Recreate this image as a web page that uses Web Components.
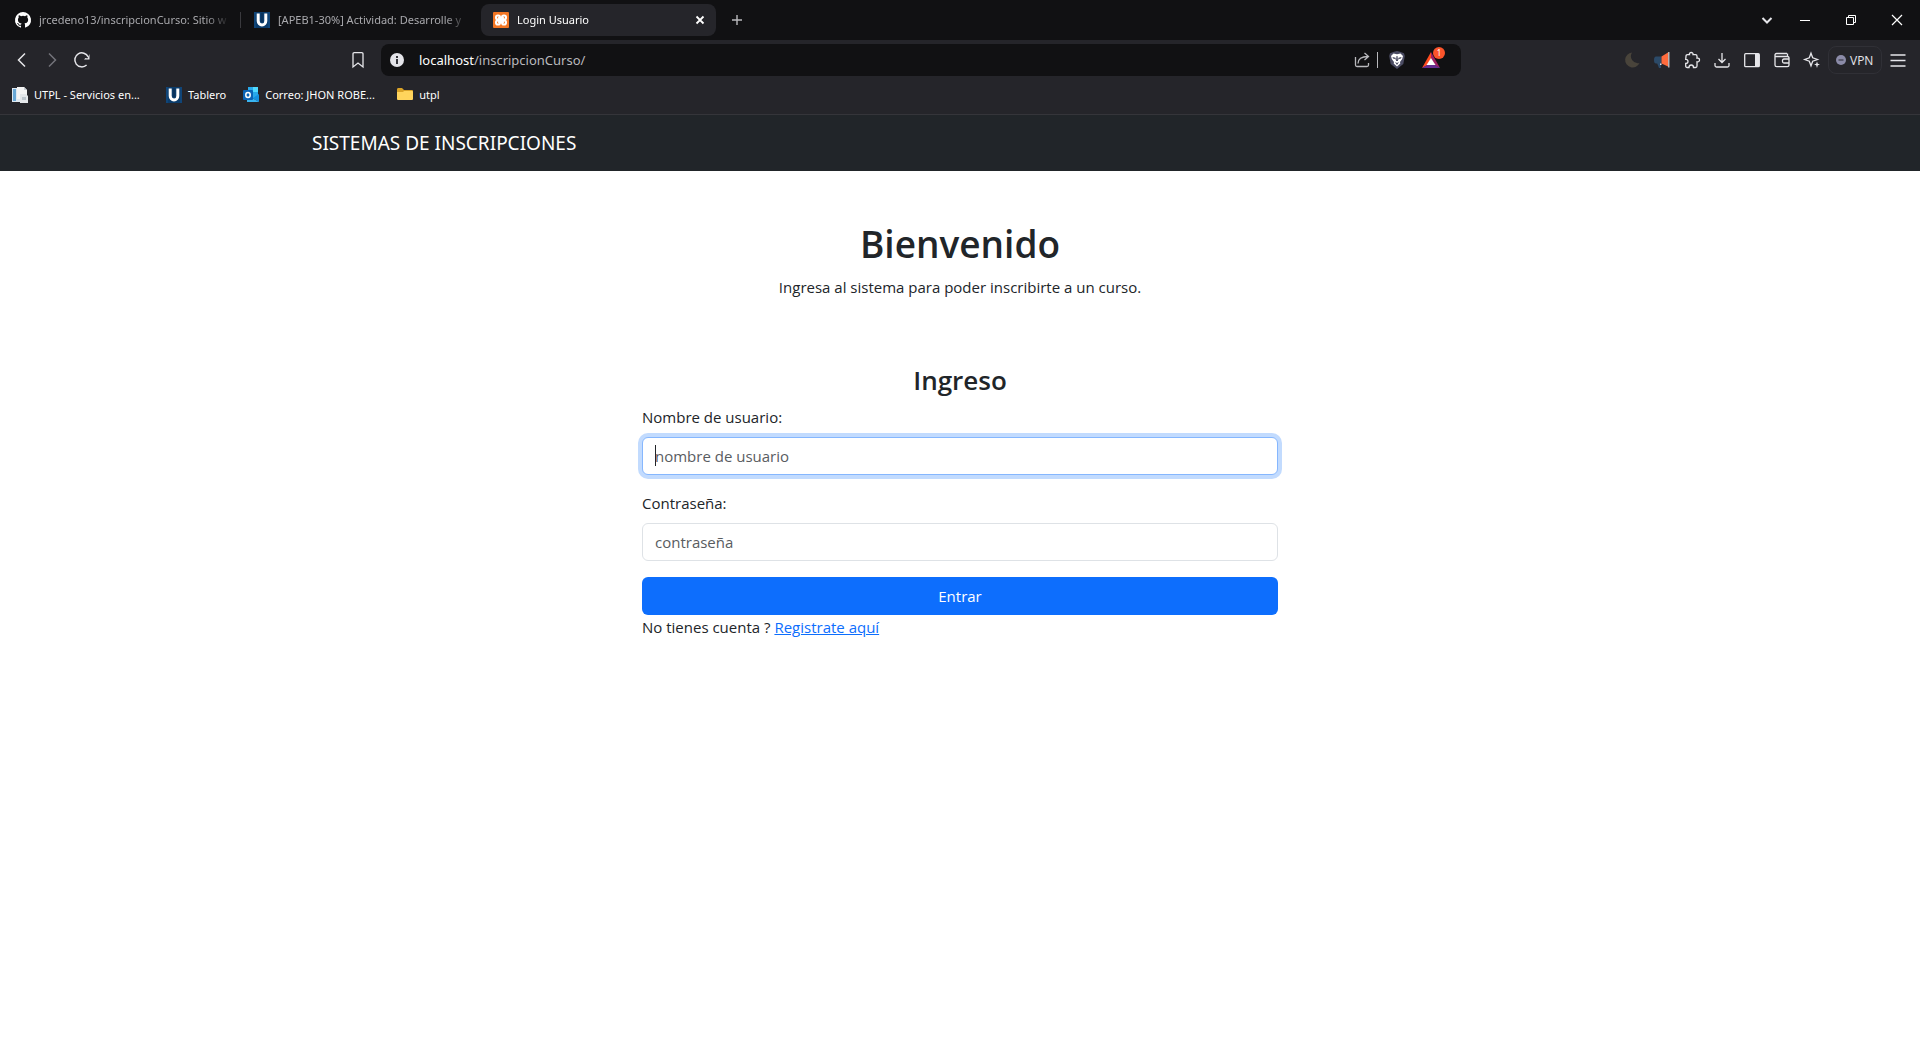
<!DOCTYPE html>
<html lang="es">
<head>
<meta charset="utf-8">
<title>Login Usuario</title>
<style>
  body { margin: 0; background: #fff; color: #212529; font-family: "Open Sans", "Noto Sans", sans-serif; font-size: 15px; line-height: 24px; }
</style>
</head>
<body>
<browser-frame>
  <browser-tab slot="tabs" label="jrcedeno13/inscripcionCurso: Sitio w" icon="github" divided></browser-tab>
  <browser-tab slot="tabs" label="[APEB1-30%] Actividad: Desarrolle y" icon="utpl"></browser-tab>
  <browser-tab slot="tabs" label="Login Usuario" icon="xampp" active></browser-tab>
  <bookmark-link slot="bookmarks" icon="page" long>UTPL - Servicios en...</bookmark-link>
  <bookmark-link slot="bookmarks" icon="utpl">Tablero</bookmark-link>
  <bookmark-link slot="bookmarks" icon="outlook" long>Correo: JHON ROBE...</bookmark-link>
  <bookmark-link slot="bookmarks" icon="folder">utpl</bookmark-link>
</browser-frame>
<site-navbar>SISTEMAS DE INSCRIPCIONES</site-navbar>
<welcome-banner heading="Bienvenido">Ingresa al sistema para poder inscribirte a un curso.</welcome-banner>
<login-form></login-form>

<script>
const U = '<rect width="16" height="16" fill="#0b3c6b"/><path d="M1 0v16M15 0v16" stroke="#164f86"/><path d="M4.200 1.500V9a3.800 4 0 0 0 7.600 0V1.500" fill="none" stroke="#fff" stroke-width="3"/><path d="M8 1v9" stroke="#0a2b50"/>';
const ICONS = {
  github: '<path fill="#fff" d="M8 0a8 8 0 0 0-2.530 15.590c.4.070.550-.170.550-.380v-1.490c-2.010.370-2.530-.490-2.690-.940-.090-.230-.480-.940-.820-1.130-.280-.150-.680-.520-.010-.530.630-.010 1.080.580 1.230.820.720 1.210 1.870.870 2.330.660.070-.520.280-.870.510-1.070-1.780-.2-3.640-.890-3.640-3.950 0-.870.310-1.590.820-2.150-.080-.2-.360-1.020.080-2.120 0 0 .670-.210 2.200.820a7.500 7.500 0 0 1 4 0c1.530-1.040 2.200-.820 2.200-.820.440 1.100.160 1.920.080 2.120.510.560.820 1.270.820 2.150 0 3.070-1.870 3.750-3.650 3.950.290.250.540.730.540 1.480v2.200c0 .210.150.460.550.380A8 8 0 0 0 8 0z"/>',
  utpl: U,
  xampp: '<rect width="16" height="16" rx="1" fill="#f37623"/><path d="M5.200 5.200l5.600 5.600M10.800 5.200l-5.600 5.600" stroke="#fff" stroke-width="2"/><g fill="none" stroke="#fff" stroke-width="2"><rect x="3" y="3.500" width="4" height="4" rx="1.800"/><rect x="9" y="3.500" width="4" height="4" rx="1.800"/><rect x="3" y="8.500" width="4" height="4" rx="1.800"/><rect x="9" y="8.500" width="4" height="4" rx="1.800"/></g>',
  page: '<path d="M0 1h9v14H0z" fill="#dfe9f1"/><path d="M1 2h3v12H1z" fill="#69a8d6"/><path d="M5 0h7l3 3v9H5z" fill="#f4f4f4"/><path d="M12 0v3h3" fill="#c8ced4"/><path d="M8 7h6l2 2v7H8z" fill="#e4e7ea"/><path d="M10 10h4v3h-4z" fill="#bcc5cc"/>',
  outlook: '<path d="M5 0h10v11H5z" fill="#28a8ea"/><path d="M10 0h5v5h-5z" fill="#50d9ff"/><path d="M5 5h5v6H5z" fill="#0364b8"/><path d="M4 8l12 7V7l-6 4z" fill="#1490df"/><path d="M4 8v7h12L4 8z" fill="#39b5f2"/><rect y="3" width="10" height="10" rx="1" fill="#0a63b5"/><ellipse cx="5" cy="8" rx="2.200" ry="2.500" fill="none" stroke="#fff" stroke-width="1.500"/>',
  folder: '<path d="M0 2.500Q0 1 1 1h4l2 2h8q1 0 1 1v8H0z" fill="#d9a227"/><path d="M0 5h6l1-1h8q1 0 1 1v7q0 1-1 1H1q-1 0-1-1z" fill="#ffd45c"/>',
  back: '<path class="s" d="M11 1.500L4.500 8l6.500 6.500" stroke-width="1.500"/>',
  forward: '<path class="s" d="M5 1.500L11.500 8 5 14.500" stroke-width="1.500"/>',
  reload: '<path class="s" d="M12.600 13A7 7 0 1 1 14.200 5" stroke-width="1.500"/><path d="M15.500 2v5.500H10L11.500 6l2 .5z" fill="currentColor"/>',
  bookmark: '<path class="s" d="M3 2q0-1.300 1.300-1.300h7.400Q13 .7 13 2v13l-5-4-5 4z" stroke-width="1.300"/>',
  info: '<circle cx="8" cy="8" r="7" fill="#e4e4e9"/><path d="M7 7h2v5H7zM7 4h2v2H7z" fill="#35353b"/>',
  share: '<path class="s" d="M1.500 5v8q0 1.500 1.500 1.500h10q1.500 0 1.500-1.500v-2M4 11.500q0-7 10-7M10.500 1l4 3.500-4 3.500" stroke-width="1.300"/>',
  brave: '<path d="M8-1l3 .8 4 1.500.8 2.700-1.500 8L8 17 1.700 12 .2 4 1 1.300l4-1.500z" fill="#4a4b62"/><path d="M4.500 1.500L8 2.300l3.500-.8L14 4l-.8 3-2.200 3 .3 1.500L8 14.500 4.700 11.500 5 10 2.800 7 2 4z" fill="#fff"/><path d="M3.500 5l3 .8L7 8l-1-1-2-.6zM12.500 5l-3 .8L9 8l1-1 2-.6zM6 10l2 1 2-1-2 3zM7.500 4h1L9 9H7z" fill="#4a4b62"/>',
  bat: '<path d="M9 0L0 16l5-2.500 4-7z" fill="#ff4b1f"/><path d="M9 0l9 16-5-2.500-4-7z" fill="#9e1f63"/><path d="M0 16l5-3h8l5 3z" fill="#662d91"/><path d="M9 6l4.500 7h-9z" fill="#fff"/>',
  moon: '<path d="M8 .5A7.500 7.500 0 1 0 15.500 11 7 7 0 0 1 8 .5z" fill="#49443b"/>',
  mega: '<path d="M2 4.500h5.500v7H2Q0 11.500 0 8t2-3.500zM3 11h4v5H5z" fill="#2c4a68"/><path d="M7.500 4.500L14 .5v14l-6.500-3z" fill="#ff6b3d"/><path d="M14.800 0v15.500" stroke="#ded8d8" stroke-width="1.200"/><path d="M6 11.500h1.500V13H6z" fill="#dfe6ee"/>',
  puzzle: '<path class="s" d="M2 4.200q0-1.500 1.500-1.500h2C5 .8 6.300.5 7.200.5S9.400.8 9 2.700h2.500q1.500 0 1.500 1.500v2c1.900-.4 2.500.8 2.500 1.800s-.6 2.100-2.500 1.800V14q0 1.500-1.500 1.500H9.500c0-2-1-2.500-2.200-2.500S5 13.500 5 15.500H3.200Q1.700 15.500 1.700 14v-2.700c2 0 2.300-1 2.300-1.900S3.500 7.300 1.700 7.300z" stroke-width="1.300"/>',
  download: '<path class="s" d="M8 1v9.500M4.500 7L8 10.500 11.500 7M1 11v2.500q0 1.500 1.500 1.500h11q1.500 0 1.500-1.500V11" stroke-width="1.300"/>',
  sidebar: '<rect class="s" x=".7" y="1.700" width="14.600" height="13" rx="1" stroke-width="1.300"/><path d="M11 2h4v12h-4z" fill="currentColor"/>',
  wallet: '<path class="s" d="M1 3v10q0 1.700 1.700 1.700h10.600q1.700 0 1.700-1.700V6q0-1.500-1.500-1.500h-11Q1 4.500 1 3q0-1.500 1.500-1.500h10.500M15 7h-5q-1.500 0-1.500 1.500v1Q8.500 11 10 11h5M13.500 1.500v3" stroke-width="1.300"/>',
  sparkle: '<path class="s" d="M7 1.200l1.700 4.600 4.800 1.700L8.700 9.200 7 13.800 5.300 9.200.7 7.500l4.600-1.700z" stroke-width="1.300"/><path d="M13 9.500l.8 2.200 2.200.8-2.200.8L13 16l-.8-2.700-2.200-.8 2.200-.8z" fill="currentColor"/>',
  menu: '<path class="s" d="M.5 3h15M.5 8.500h15M.5 14h15" stroke-width="1.400"/>',
  chevron: '<path class="s" d="M3.500 6L8 10.500 12.500 6" stroke-width="2"/>',
  min: '<path d="M3 8h10v1H3z" fill="currentColor"/>',
  restore: '<path class="s" d="M3.500 5.500h7v7h-7zM5.500 5.500v-2h7v7h-2"/>',
  exit: '<path class="s" d="M3 3l10 10M13 3L3 13" stroke-width="1.200"/>',
  close: '<path class="s" d="M4.500 4.500l7 7M11.500 4.500l-7 7" stroke-width="1.800"/>',
  plus: '<path class="s" d="M8 3v10M3 8h10" stroke-width="1.400"/>',
  off: '<circle cx="8" cy="8" r="8" fill="#8b8ba8"/><path d="M4 7h8v2H4z" fill="#3c3c4b"/>'
};

// Attaches an open shadow root filled with the given markup.
class Base extends HTMLElement {
  connectedCallback() {
    if (!this.shadowRoot) this.attachShadow({ mode: 'open' }).innerHTML = '<style>*{box-sizing:border-box}</style>' + this.view();
  }
}

customElements.define('ui-icon', class extends Base {
  view() {
    const w = this.getAttribute('name') === 'bat' ? 18 : 16;
    return `<style>:host{display:block;flex:none;width:${w}px;height:16px}:host([small]){width:10px;height:10px}svg{display:block;width:100%;height:100%;overflow:visible}.s{fill:none;stroke:currentColor}</style>
    <svg viewBox="0 0 ${w} 16" aria-hidden="true">${ICONS[this.getAttribute('name')]}</svg>`;
  }
});

customElements.define('icon-button', class extends Base {
  view() {
    return `<style>
      :host{display:block;flex:none;width:30px;height:30px;color:#e6e6ea}
      :host([wide]){width:46px;height:40px;color:#fff}
      :host([dim]){color:#73737a}
      :host([soft]){color:#b9b9bd}
      button{width:100%;height:100%;display:flex;align-items:center;justify-content:center;border:0;padding:0;background:none;color:inherit}
    </style><button type="button" aria-label="${this.getAttribute('label')}"><ui-icon name="${this.getAttribute('icon')}"></ui-icon></button>`;
  }
});

customElements.define('browser-tab', class extends Base {
  view() {
    const active = this.hasAttribute('active');
    return `<style>
      :host{box-sizing:border-box;display:flex;align-items:center;gap:8px;flex:1 1 0;min-width:0;height:32px;padding:0 8px 0 12px;border-radius:8px;color:#a9a9ad;font-size:11px;line-height:16px;position:relative}
      :host([active]){background:#25252a;color:#fff}
      :host([divided])::after{content:"";position:absolute;right:-3px;top:8px;width:1px;height:16px;background:#3a3a3e}
      span{flex:1;overflow:hidden;white-space:nowrap;-webkit-mask-image:linear-gradient(to left,transparent,#000 24px);mask-image:linear-gradient(to left,transparent,#000 24px)}
      button{border:0;background:none;padding:0;color:inherit}
    </style>
    <ui-icon name="${this.getAttribute('icon')}"></ui-icon><span>${this.getAttribute('label')}</span>
    ${active ? '<button type="button" aria-label="Cerrar"><ui-icon name="close"></ui-icon></button>' : ''}`;
  }
});

customElements.define('bookmark-link', class extends Base {
  view() {
    return `<style>
      :host{display:block}
      :host([long]){width:137px}
      a{display:flex;align-items:center;gap:6px;color:#fff;text-decoration:none;font-size:11px;line-height:16px;white-space:nowrap}
    </style><a href="#"><ui-icon name="${this.getAttribute('icon')}"></ui-icon><slot></slot></a>`;
  }
});

customElements.define('address-bar', class extends Base {
  view() {
    return `<style>
      :host{box-sizing:border-box;display:flex;align-items:center;height:32px;padding:0 12px 0 8px;border-radius:8px;background:#111113;min-width:0}
      .url{flex:1;padding-left:14px;font:13px/20px "Noto Sans",sans-serif;color:#b9b9bd;white-space:nowrap}
      b{font-weight:400;color:#fff}
      hr{width:1px;height:16px;margin:0 11px 0 0;border:0;background:#b9b9bd}
      .bat{position:relative;margin-left:17px;margin-right:9px}
      .badge{position:absolute;left:11px;top:-5px;width:12px;height:12px;border-radius:6px;background:#fb542b;color:#fff;font-size:8px;line-height:12px;text-align:center}
    </style>
    <ui-icon name="info"></ui-icon><div class="url"><b>localhost</b>/inscripcionCurso/</div>
    <icon-button soft icon="share" label="Compartir"></icon-button><hr>
    <ui-icon name="brave"></ui-icon>
    <div class="bat"><ui-icon name="bat"></ui-icon><span class="badge">1</span></div>`;
  }
});

customElements.define('browser-frame', class extends Base {
  view() {
    const tools = [['moon','Modo oscuro'],['mega','Avisos'],['puzzle','Extensiones'],['download','Descargas'],['sidebar','Panel lateral'],['wallet','Cartera'],['sparkle','Leo']];
    return `<style>
      :host{display:block;background:#25252a;font-family:"Noto Sans",sans-serif}
      .strip{display:flex;align-items:center;height:40px;padding-left:3px;background:#111113}
      .tabs{display:flex;gap:4px;flex:0 1 713px;min-width:0}
      .strip icon-button:not([wide]){margin-left:6px}
      .fill{flex:1}
      .tools{display:flex;align-items:center;height:40px;padding:0 7px}
      .left{flex:246 1 0}
      address-bar{flex:1060 1 0;margin-left:8px}
      .right{flex:156 1 0}
      .vpn{display:flex;align-items:center;gap:4px;width:54px;height:28px;padding:0 7px;margin:0 1px;border:1px solid #303036;border-radius:8px;background:none;color:#e6e6ea;font:12px "Open Sans",sans-serif}
      .marks{display:flex;align-items:center;gap:17px;height:35px;padding:0 12px 4px;border-bottom:1px solid #35353a}
    </style>
    <div class="strip"><div class="tabs"><slot name="tabs"></slot></div>
      <icon-button soft icon="plus" label="Nueva"></icon-button><div class="fill"></div>
      <icon-button icon="chevron" label="Buscar"></icon-button>
      <icon-button wide icon="min" label="Minimizar"></icon-button><icon-button wide icon="restore" label="Restaurar"></icon-button><icon-button wide icon="exit" label="Cerrar"></icon-button>
    </div>
    <div class="tools">
      <icon-button icon="back" label="Volver"></icon-button><icon-button dim icon="forward" label="Adelante"></icon-button><icon-button icon="reload" label="Recargar"></icon-button>
      <div class="left"></div><icon-button icon="bookmark" label="Marcador"></icon-button><address-bar></address-bar><div class="right"></div>
      ${tools.map(([i, l]) => `<icon-button icon="${i}" label="${l}"></icon-button>`).join('')}
      <button class="vpn" type="button"><ui-icon small name="off"></ui-icon>VPN</button>
      <icon-button icon="menu" label="Menú"></icon-button>
    </div>
    <div class="marks"><slot name="bookmarks"></slot></div>`;
  }
});

customElements.define('site-navbar', class extends Base {
  view() {
    return `<style>
      :host{display:block;background:#212529;padding:8px 0}
      nav{box-sizing:border-box;max-width:1320px;margin:0 auto;padding:0 12px}
      a{display:inline-block;padding:5px 0;font:19px/30px "Noto Sans",sans-serif;color:#fff;text-decoration:none;vertical-align:top}
    </style><nav><a href="#"><slot></slot></a></nav>`;
  }
});

customElements.define('welcome-banner', class extends Base {
  view() {
    return `<style>
      :host{display:block;padding:48px 12px;text-align:center}
      h1{margin:0 0 6px;font-size:37px;line-height:50px;font-weight:600}
      p{margin:0 0 16px}
    </style><h1>${this.getAttribute('heading')}</h1><p><slot></slot></p>`;
  }
});

customElements.define('login-form', class extends Base {
  view() {
    return `<style>
      :host{display:block;max-width:1320px;margin:0 auto}
      form{width:50%;margin:0 auto;padding:0 12px}
      h3{margin:0 0 8px;font-size:26px;line-height:34px;font-weight:600;text-align:center}
      label{display:block;margin-bottom:8px}
      input{display:block;width:100%;height:38px;margin-bottom:16px;padding:6px 12px;border:1px solid #dee2e6;border-radius:6px;background:#fff;color:#212529;font:inherit;outline:0}
      input::placeholder{color:#595c5f;opacity:1}
      #user{border-color:#86b7fe;box-shadow:0 0 0 4px #c2dbfe;caret-color:transparent;background:linear-gradient(#212529,#212529) 12px 7px/1px 21px no-repeat #fff}
      button{display:block;width:100%;height:38px;border:0;border-radius:6px;background:#0d6efd;color:#fff;font:inherit}
      a{color:#0d6efd}
    </style>
    <form>
      <h3>Ingreso</h3>
      <label for="user">Nombre de usuario:</label><input id="user" type="text" placeholder="nombre de usuario">
      <label for="pass">Contraseña:</label><input id="pass" type="password" placeholder="contraseña">
      <button type="button">Entrar</button>
      <div>No tienes cuenta ? <a href="#">Registrate aquí</a></div>
    </form>`;
  }
});
</script>
</body>
</html>
